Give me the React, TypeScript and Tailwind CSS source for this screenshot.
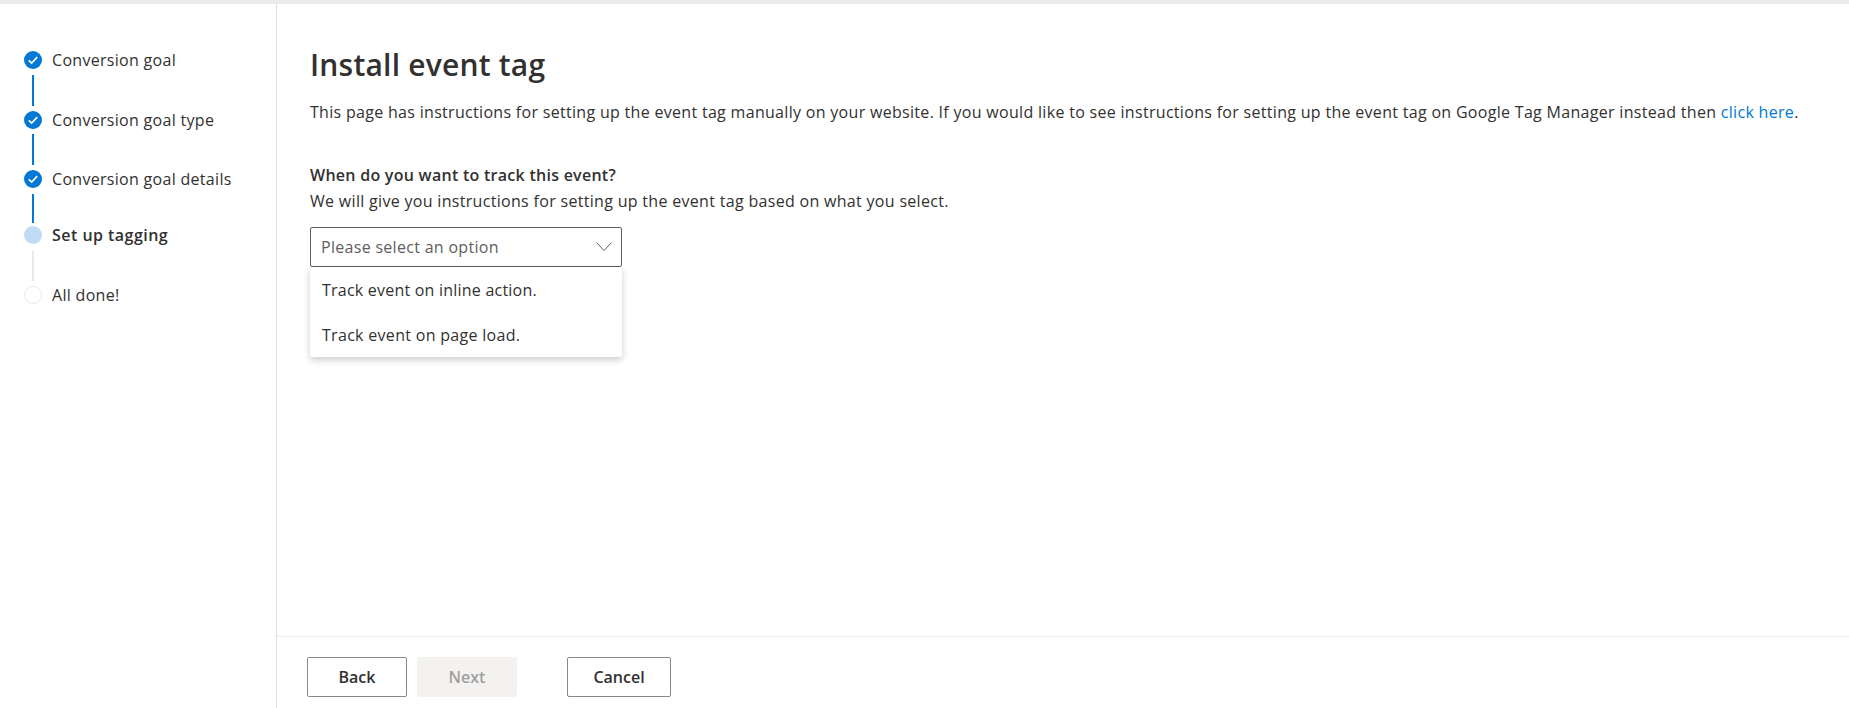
import React from "react";

const font = "font-['Open_Sans','Noto_Sans',sans-serif]";

function Check() {
  return (
    <span className="flex h-[18px] w-[18px] items-center justify-center rounded-full bg-[#0078d4]">
      <svg width="12" height="12" viewBox="0 0 12 12" fill="none">
        <path d="M1.8 6.3 L4.7 9 L10.2 3.2" stroke="#fff" strokeWidth="1.7" />
      </svg>
    </span>
  );
}

function Step({ label, state, lineClass, h }: { label: string; state: "done" | "current" | "todo"; lineClass?: string; h: string }) {
  return (
    <div className={`flex flex-col ${h}`}>
      <div className="flex h-[18px] items-center">
        {state === "done" && <Check />}
        {state === "current" && <span className="h-[18px] w-[18px] rounded-full bg-[#c0dcf5]" />}
        {state === "todo" && <span className="h-[18px] w-[18px] rounded-full border border-[#edebe9] bg-white" />}
        <span className={`pl-[10px] whitespace-nowrap text-[16px] text-[#323130] ${state === "current" ? "font-semibold tracking-[0.47px]" : "tracking-[0.3px]"}`}>{label}</span>
      </div>
      {lineClass && <span className={`ml-[8px] w-[2px] ${lineClass}`} />}
    </div>
  );
}

export default function App() {
  return (
    <div className={`flex h-[708px] w-[1849px] flex-col overflow-hidden bg-white text-[#323130] ${font}`}>
      <div className="h-[4px] shrink-0 bg-[#edebe9]" />
      <div className="flex min-h-0 flex-1">
        <aside className="w-[277px] shrink-0 border-r border-[#e1dfdd] pl-[24px] pt-[47px]">
          <Step label="Conversion goal" state="done" lineClass="mt-[6px] h-[31px] bg-[#0078d4]" h="h-[60px]" />
          <Step label="Conversion goal type" state="done" lineClass="mt-[5px] h-[31px] bg-[#0078d4]" h="h-[59px]" />
          <Step label="Conversion goal details" state="done" lineClass="mt-[6px] h-[29px] bg-[#0078d4]" h="h-[56px]" />
          <Step label="Set up tagging" state="current" lineClass="mt-[7px] h-[30px] bg-[#e8e8e8]" h="h-[60px]" />
          <Step label="All done!" state="todo" h="h-[18px]" />
        </aside>
        <main className="flex min-w-0 flex-1 flex-col">
          <div className="min-h-0 flex-1 pl-[33px] pt-[41px]">
            <h1 className="text-[30px] font-semibold leading-[40px] tracking-[0.2px] text-[#323130]">Install event tag</h1>
            <p className="mt-[16px] whitespace-nowrap text-[16px] leading-[22px] tracking-[0.305px]">
              This page has instructions for setting up the event tag manually on your website. If you would like to see instructions for setting up the event tag on Google Tag Manager instead then <span className="text-[#0078d4]">click here</span>.
            </p>
            <div className="mt-[40px] text-[16px] font-semibold leading-[25px] tracking-[0.27px]">When do you want to track this event?</div>
            <div className="text-[16px] leading-[26px] tracking-[0.31px]">We will give you instructions for setting up the event tag based on what you select.</div>
            <div className="relative mt-[13px] w-[312px]">
              <div className="flex h-[40px] items-center justify-between rounded-[2px] border border-[#605e5c] pl-[10px] pr-[9px] text-[16px] tracking-[0.3px] text-[#605e5c]">
                <span>Please select an option</span>
                <svg width="16" height="16" viewBox="0 0 16 16" fill="none">
                  <path d="M0.5 3.5 L8 11.5 L15.5 3.5" stroke="#605e5c" strokeWidth="1" />
                </svg>
              </div>
              <div className="absolute left-0 top-[40px] w-full rounded-b-[2px] bg-white shadow-[0_3px_7px_rgba(0,0,0,0.2)]">
                <div className="flex h-[45px] items-center pl-[12px] text-[16px] tracking-[0.22px]">Track event on inline action.</div>
                <div className="flex h-[45px] items-center pl-[12px] text-[16px] tracking-[0.3px]">Track event on page load.</div>
              </div>
            </div>
          </div>
          <div className="flex h-[72px] shrink-0 items-start border-t border-[#edebe9] pl-[30px] pt-[20px]">
            <button className="h-[40px] w-[100px] rounded-[2px] border border-[#8a8886] bg-white text-[16px] font-semibold text-[#323130]">Back</button>
            <button className="ml-[10px] h-[40px] w-[100px] rounded-[2px] bg-[#f3f2f1] text-[16px] font-semibold text-[#a19f9d]">Next</button>
            <button className="ml-[50px] h-[40px] w-[104px] rounded-[2px] border border-[#8a8886] bg-white text-[16px] font-semibold text-[#323130]">Cancel</button>
          </div>
        </main>
      </div>
    </div>
  );
}
